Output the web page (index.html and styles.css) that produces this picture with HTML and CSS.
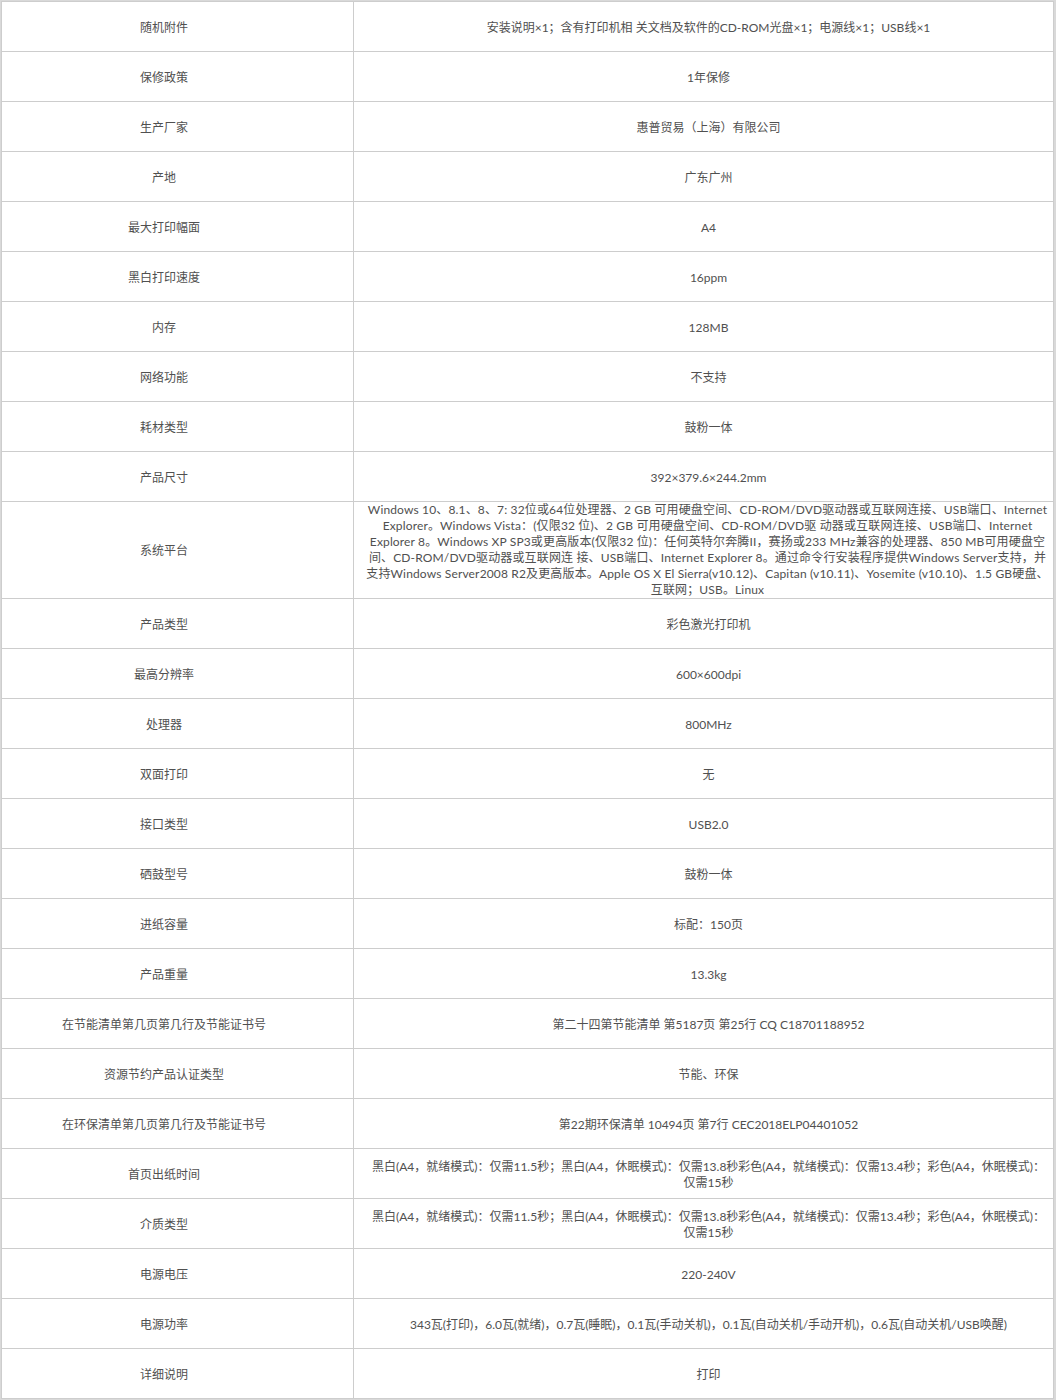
FILE: index.html
```html
<!DOCTYPE html>
<html lang="zh-CN">
<head>
<meta charset="utf-8">
<title>参数</title>
<link rel="stylesheet" href="styles.css">
</head>
<body>
<div class="wrap">
<table class="spec">
<tbody>
<tr><td class="k">随机附件</td><td class="v">安装说明×1；含有打印机相 关文档及软件的CD-ROM光盘×1；电源线×1；USB线×1</td></tr>
<tr><td class="k">保修政策</td><td class="v">1年保修</td></tr>
<tr><td class="k">生产厂家</td><td class="v">惠普贸易（上海）有限公司</td></tr>
<tr><td class="k">产地</td><td class="v">广东广州</td></tr>
<tr><td class="k">最大打印幅面</td><td class="v">A4</td></tr>
<tr><td class="k">黑白打印速度</td><td class="v">16ppm</td></tr>
<tr><td class="k">内存</td><td class="v">128MB</td></tr>
<tr><td class="k">网络功能</td><td class="v">不支持</td></tr>
<tr><td class="k">耗材类型</td><td class="v">鼓粉一体</td></tr>
<tr><td class="k">产品尺寸</td><td class="v">392×379.6×244.2mm</td></tr>
<tr><td class="k">系统平台</td><td class="v v-long">Windows 10、8.1、8、7: 32位或64位处理器、2 GB 可用硬盘空间、CD-ROM/DVD驱动器或互联网连接、USB端口、Internet Explorer。Windows Vista：(仅限32 位)、2 GB 可用硬盘空间、CD-ROM/DVD驱 动器或互联网连接、USB端口、Internet Explorer 8。Windows XP SP3或更高版本(仅限32 位)：任何英特尔奔腾II，赛扬或233 MHz兼容的处理器、850 MB可用硬盘空间、CD-ROM/DVD驱动器或互联网连 接、USB端口、Internet Explorer 8。通过命令行安装程序提供Windows Server支持，并支持Windows Server2008 R2及更高版本。Apple OS X El Sierra(v10.12)、Capitan (v10.11)、Yosemite (v10.10)、1.5 GB硬盘、互联网；USB。Linux</td></tr>
<tr><td class="k">产品类型</td><td class="v">彩色激光打印机</td></tr>
<tr><td class="k">最高分辨率</td><td class="v">600×600dpi</td></tr>
<tr><td class="k">处理器</td><td class="v">800MHz</td></tr>
<tr><td class="k">双面打印</td><td class="v">无</td></tr>
<tr><td class="k">接口类型</td><td class="v">USB2.0</td></tr>
<tr><td class="k">硒鼓型号</td><td class="v">鼓粉一体</td></tr>
<tr><td class="k">进纸容量</td><td class="v">标配：150页</td></tr>
<tr><td class="k">产品重量</td><td class="v">13.3kg</td></tr>
<tr><td class="k">在节能清单第几页第几行及节能证书号</td><td class="v">第二十四第节能清单 第5187页 第25行 CQ C18701188952</td></tr>
<tr><td class="k">资源节约产品认证类型</td><td class="v">节能、环保</td></tr>
<tr><td class="k">在环保清单第几页第几行及节能证书号</td><td class="v">第22期环保清单 10494页 第7行 CEC2018ELP04401052</td></tr>
<tr><td class="k">首页出纸时间</td><td class="v">黑白(A4，就绪模式)：仅需11.5秒；黑白(A4，休眠模式)：仅需13.8秒彩色(A4，就绪模式)：仅需13.4秒；彩色(A4，休眠模式)：仅需15秒</td></tr>
<tr><td class="k">介质类型</td><td class="v">黑白(A4，就绪模式)：仅需11.5秒；黑白(A4，休眠模式)：仅需13.8秒彩色(A4，就绪模式)：仅需13.4秒；彩色(A4，休眠模式)：仅需15秒</td></tr>
<tr><td class="k">电源电压</td><td class="v">220-240V</td></tr>
<tr><td class="k">电源功率</td><td class="v">343瓦(打印)，6.0瓦(就绪)，0.7瓦(睡眠)，0.1瓦(手动关机)，0.1瓦(自动关机/手动开机)，0.6瓦(自动关机/USB唤醒)</td></tr>
<tr><td class="k">详细说明</td><td class="v">打印</td></tr>
</tbody>
</table>
</div>
</body>
</html>
```

FILE: styles.css
```css
html, body {
  margin: 0;
  padding: 0;
  background: #ffffff;
}

.wrap {
  width: 1056px;
  box-sizing: border-box;
  border-style: solid;
  border-color: #d9d9d9;
  border-width: 1px 2px 2px 1px;
}

.spec {
  width: 100%;
  border-collapse: collapse;
  table-layout: fixed;
  font-family: Lato, "Noto Sans CJK SC", sans-serif;
  font-size: 12px;
  line-height: 16px;
  color: #505050;
}

.spec td {
  border: 1px solid #cdcdcd;
  text-align: center;
  vertical-align: middle;
  height: 47px;
  padding: 2px 0 0 0;
}

.spec td.k {
  width: 324px;
  padding-right: 27px;
}

.spec td.v {
  padding-left: 15px;
  padding-right: 5px;
}

.spec td.v-long {
  padding-top: 0;
  padding-left: 12px;
  padding-right: 4px;
  letter-spacing: 0.15px;
}
```
